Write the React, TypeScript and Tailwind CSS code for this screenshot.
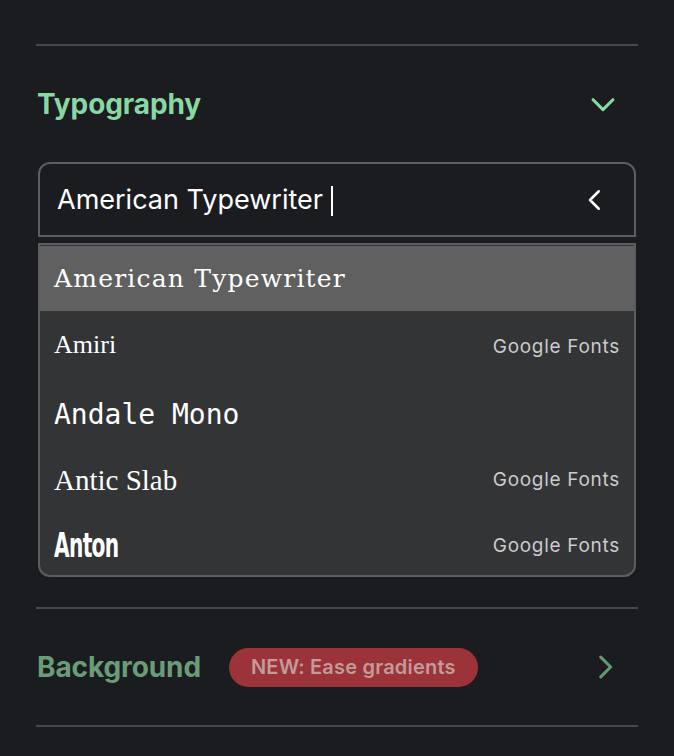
import React from "react";

const Chevron = ({ d, className, w = 2.4 }: { d: string; className?: string; w?: number }) => (
  <svg viewBox="0 0 24 24" fill="none" stroke="currentColor" strokeWidth={w} strokeLinecap="round" strokeLinejoin="round" className={className}>
    <path d={d} />
  </svg>
);

export default function App() {
  return (
    <div className="w-[674px] h-[756px] bg-[#1b1c20] font-['Inter',sans-serif] overflow-hidden">
      <div className="px-[36px] pt-[44px]">
        <div className="h-[2px] bg-[#47484b]" />
        <div className="h-[116px] flex items-center justify-between pl-[1px] pr-[18px]">
          <span className="text-[28px] font-bold text-[#88d8a3] tracking-[-0.1px]">Typography</span>
          <Chevron d="M5 9l7 7 7-7" className="w-[34px] h-[34px] text-[#88d8a3]" w={2.2} />
        </div>
        <div className="mx-[2px] h-[75px] border-2 border-[#5c5d60] rounded-t-[12px] flex items-center justify-between pl-[17px] pr-[24px]">
          <div className="flex items-center pt-[2px]">
            <span className="text-[27px] text-white">American Typewriter</span>
            <span className="ml-[8px] w-[2px] h-[30px] bg-white" />
          </div>
          <Chevron d="M15 5l-7 7 7 7" className="w-[30px] h-[30px] text-white" w={2} />
        </div>
        <div className="mx-[2px] mt-[6px] border-2 border-[#5c5d60] rounded-b-[12px] bg-[#333436] overflow-hidden">
          <div className="h-[66px] bg-[#5f605f] flex items-center pl-[14px] border-t border-[#333436]">
            <span className="font-['DejaVu_Serif',serif] text-[25px] text-white tracking-[1.2px]">American Typewriter</span>
          </div>
          <div className="h-[66px] flex items-center justify-between px-[14px]">
            <span className="font-['Liberation_Serif',serif] text-[26px] text-white">Amiri</span>
            <span className="text-[19px] text-[#cbcbcb] tracking-[0.7px] mt-[7px]">Google Fonts</span>
          </div>
          <div className="h-[66px] flex items-center justify-between px-[14px] pt-[9px]">
            <span className="font-['DejaVu_Sans_Mono',monospace] text-[28px] text-white">Andale Mono</span>
          </div>
          <div className="h-[66px] flex items-center justify-between px-[14px] pt-[9px]">
            <span className="font-['Liberation_Serif',serif] text-[29px] text-white">Antic Slab</span>
            <span className="text-[19px] text-[#cbcbcb] tracking-[0.7px]">Google Fonts</span>
          </div>
          <div className="h-[66px] flex items-center justify-between px-[14px] pt-[8px]">
            <span className="font-['DejaVu_Sans_Condensed',sans-serif] font-bold text-[33px] text-white scale-x-[0.68] origin-left tracking-[-1px] inline-block">Anton</span>
            <span className="text-[19px] text-[#cbcbcb] tracking-[0.7px]">Google Fonts</span>
          </div>
        </div>
        <div className="h-[2px] bg-[#47484b] mt-[30px]" />
        <div className="h-[116px] flex items-center pl-[1px] pr-[16px]">
          <span className="text-[28px] font-bold text-[#6a9d77] tracking-[-0.1px]">Background</span>
          <span className="ml-[28px] h-[39px] px-[22px] rounded-full bg-[#9b3338] text-[#c49a9b] text-[20px] font-semibold flex items-center tracking-[0.2px]">
            NEW: Ease gradients
          </span>
          <Chevron d="M9 5l7 7-7 7" className="ml-auto w-[34px] h-[34px] text-[#5f9a70]" w={2.2} />
        </div>
        <div className="h-[2px] bg-[#47484b]" />
      </div>
    </div>
  );
}
